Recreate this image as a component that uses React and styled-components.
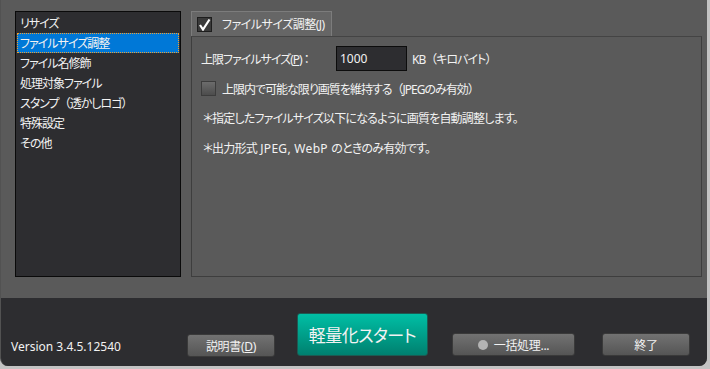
import React from 'react';
import styled, { createGlobalStyle } from 'styled-components';

const GlobalStyle = createGlobalStyle`
  html, body {
    margin: 0;
    padding: 0;
    background: #c3c3c3;
  }
  body {
    font-family: "Noto Sans", "Noto Sans CJK JP", sans-serif;
    font-feature-settings: "palt" 1;
    font-size: 12px;
    letter-spacing: -1px;
    color: #f2f2f2;
  }
`;

// full-width brackets keep their full width, as in the original UI font
const Wide = styled.span`
  font-feature-settings: normal;
`;

const MENU = [
  'リサイズ',
  'ファイルサイズ調整',
  'ファイル名修飾',
  '処理対象ファイル',
  <>スタンプ<Wide>（</Wide>透かしロゴ<Wide>）</Wide></>,
  '特殊設定',
  'その他',
];

const App = () => (
  <>
    <GlobalStyle />
    <Window>
      <Main>
        <MenuList>
          {MENU.map((item, i) => (
            <MenuItem key={i} selected={i === 1}>{item}</MenuItem>
          ))}
        </MenuList>
        <Pane>
          <TabRow>
            <Tab>
              <TabCheck><CheckMark /></TabCheck>
              <TabLabel>ファイルサイズ調整(<u>J</u>)</TabLabel>
            </Tab>
          </TabRow>
          <Panel>
            <FieldRow>
              <FieldLabel>上限ファイルサイズ(<u>P</u>) ：</FieldLabel>
              <NumberBox>1000</NumberBox>
              <Unit>KB<Wide>（</Wide>キロバイト<Wide>）</Wide></Unit>
            </FieldRow>
            <CheckRow>
              <CheckBox />
              <span>上限内で可能な限り画質を維持する<Wide>（</Wide>JPEGのみ有効<Wide>）</Wide></span>
            </CheckRow>
            <Note>＊指定したファイルサイズ以下になるように画質を自動調整します。</Note>
            <Note>＊出力形式<Latin> JPEG, WebP </Latin>のときのみ有効です。</Note>
          </Panel>
        </Pane>
      </Main>
      <Footer>
        <Version>Version 3.4.5.12540</Version>
        <Button width={88} offset={1}>
          <span>説明書(<u>D</u>)</span>
        </Button>
        <StartButton>軽量化スタート</StartButton>
        <Button width={123} gap={24}>
          <Dot />
          <span>一括処理...</span>
        </Button>
        <Button width={88} gap={27}>終了</Button>
      </Footer>
    </Window>
  </>
);

const CheckMark = () => (
  <svg width="13" height="13" viewBox="0 0 13 13">
    <path d="M2 7 L5 11.5 L11.5 1.5" fill="none" stroke="#fff" strokeWidth="2.2" />
  </svg>
);

// Styled components
const Window = styled.div`
  width: 707px;
  height: 366px;
  background: #5a5a5a;
  border-radius: 0 0 8px 8px;
  overflow: hidden;
  display: flex;
  flex-direction: column;
  border-left: 1px solid #525252;
  box-sizing: border-box;
`;

const Main = styled.div`
  display: flex;
  height: 298px;
  box-sizing: border-box;
  padding: 11px 5px 0 14px;
  gap: 10px;
`;

const MenuList = styled.div`
  width: 166px;
  height: 266px;
  box-sizing: border-box;
  background: #2d2d30;
  border: 1px solid #0a0a0a;
  padding: 1px;
  display: flex;
  flex-direction: column;
`;

const MenuItem = styled.div`
  height: 20px;
  line-height: 19px;
  padding-left: 2px;
  white-space: nowrap;
  box-sizing: border-box;
  background: ${p => (p.selected ? '#0078d7' : 'transparent')};
  border: 1px dotted ${p => (p.selected ? '#f0a030' : 'transparent')};
`;

const Pane = styled.div`
  flex: 1;
  display: flex;
  flex-direction: column;
  height: 266px;
`;

const TabRow = styled.div`
  display: flex;
  height: 25px;
`;

const Tab = styled.div`
  width: 141px;
  box-sizing: border-box;
  background: #666666;
  border: 1px solid #7c7c7c;
  border-bottom: none;
  display: flex;
  align-items: center;
  padding-left: 5px;
  gap: 10px;
`;

const TabCheck = styled.div`
  width: 15px;
  height: 15px;
  box-sizing: border-box;
  background: #3a3a3a;
  border: 1px solid #1e1e1e;
  display: flex;
  align-items: center;
  justify-content: center;
`;

const TabLabel = styled.span`
  white-space: nowrap;
  letter-spacing: -0.5px;
`;

const Panel = styled.div`
  width: 511px;
  height: 241px;
  box-sizing: border-box;
  border: 1px solid #3e3e3e;
  border-top-color: #444;
  background: #5a5a5a;
  padding: 9px 0 0 9px;
  display: flex;
  flex-direction: column;
`;

const FieldRow = styled.div`
  display: flex;
  align-items: center;
  height: 25px;
`;

const FieldLabel = styled.span`
  width: 135px;
  white-space: nowrap;
`;

const NumberBox = styled.div`
  width: 71px;
  height: 25px;
  box-sizing: border-box;
  background: #2d2d30;
  border: 1px solid #0c0c0c;
  padding-left: 3px;
  line-height: 23px;
  letter-spacing: 0;
`;

const Unit = styled.span`
  margin-left: 5px;
  white-space: nowrap;
`;

const CheckRow = styled.div`
  display: flex;
  align-items: center;
  gap: 6px;
  margin-top: 10px;
  height: 15px;
  white-space: nowrap;
`;

const CheckBox = styled.div`
  width: 15px;
  height: 15px;
  box-sizing: border-box;
  border: 1px solid #3c3c3c;
  background: linear-gradient(#6c6c6c, #4c4c4c);
`;

const Note = styled.div`
  margin-top: 15px;
  padding-left: 2px;
  white-space: nowrap;
  line-height: 15px;
  letter-spacing: -0.8px;
`;

const Latin = styled.span`
  letter-spacing: 0.3px;
  white-space: pre;
`;

const Footer = styled.div`
  flex: 1;
  background: #2d2d30;
  display: flex;
  align-items: flex-end;
  padding: 0 0 10px 10px;
`;

const Version = styled.div`
  width: 176px;
  font-size: 12px;
  line-height: 16px;
  margin-bottom: 1px;
  letter-spacing: 0;
`;

const Button = styled.div`
  width: ${p => p.width}px;
  height: 23px;
  margin-left: ${p => p.gap || 0}px;
  margin-bottom: ${p => -(p.offset || 0)}px;
  box-sizing: border-box;
  border-radius: 3px;
  border: 1px solid #3a3a3a;
  background: linear-gradient(#727272, #555555);
  display: flex;
  align-items: center;
  justify-content: center;
  gap: 6px;
  font-size: 12px;
  letter-spacing: -0.3px;
`;

const StartButton = styled.div`
  width: 131px;
  height: 43px;
  margin-left: 22px;
  box-sizing: border-box;
  border-radius: 3px;
  border: 1px solid #1d5a52;
  background: linear-gradient(#00bfa5, #00806f);
  display: flex;
  align-items: center;
  justify-content: center;
  font-size: 17px;
  letter-spacing: -0.5px;
`;

const Dot = styled.span`
  width: 10px;
  height: 10px;
  border-radius: 50%;
  background: #b4b4b4;
`;

export default App;
